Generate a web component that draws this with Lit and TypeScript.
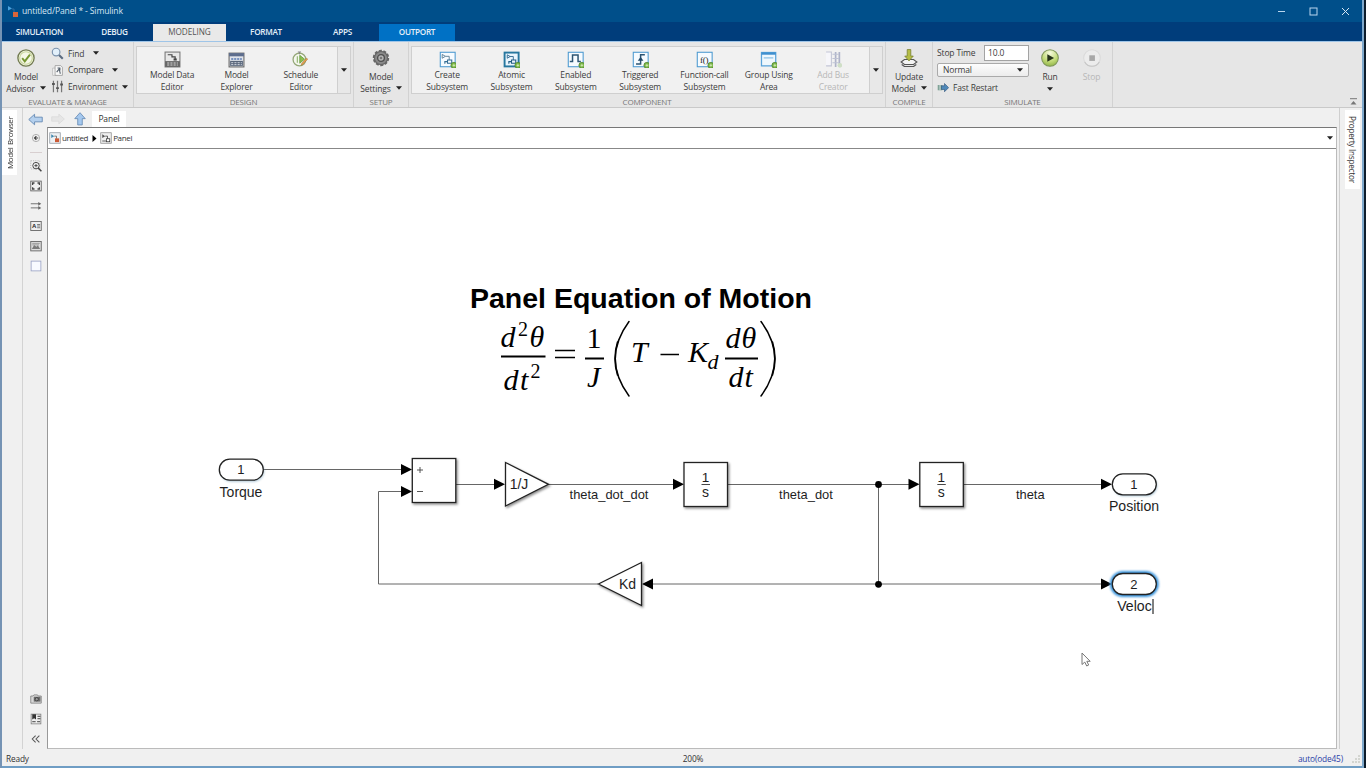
import { LitElement, html, svg, css, nothing } from "lit";
import { customElement } from "lit/decorators.js";
import { classMap } from "lit/directives/class-map.js";

const caret = html`<svg class="caret" width="6" height="4" viewBox="0 0 6 4"><path d="M0 .3h6L3 3.8z" fill="#222" /></svg>`;

const plus = svg`<circle cx="14" cy="13.500" r="2.800" fill="#7db84a" stroke="#4a7f2c" stroke-width=".7"/><path d="M14 12.300v2.400M12.800 13.500h2.400" stroke="#dff0c8" stroke-width=".7"/>`;
const box = svg`<rect x="1.2" y="1.2" width="14" height="13.6" fill="#f6fbff" stroke="#4d9ad0" stroke-width="1"/>`;

const icons: Record<string, unknown> = {
  advisor: svg`<circle cx="8" cy="8" r="7.2" fill="#f5f7e6" stroke="#727b50" stroke-width="1.2"/><circle cx="8" cy="8" r="5.6" fill="none" stroke="#c8d59b" stroke-width="1"/><path d="M4.6 8.2l2.3 2.8 4.6-6" fill="none" stroke="#769632" stroke-width="1.7"/>`,
  data: svg`<rect x="1" y="1" width="14" height="14" fill="#e8e8e8" stroke="#777"/><path d="M1 9.5h14V15H1z" fill="#666"/><path d="M3 11.3h10M3 13.2h10" stroke="#ddd" stroke-width=".9" stroke-dasharray="2 1"/><path d="M3.5 3.5h4v2h3v2.5" fill="none" stroke="#444" stroke-width="1.1"/><path d="M9 7h3v2H9z" fill="#444"/>`,
  explorer: svg`<rect x="1" y="2" width="14" height="13" fill="#dfe3ea" stroke="#666"/><path d="M1 2h14v3H1z" fill="#5d6d8d"/><path d="M3 7.5h10" stroke="#5577b0" stroke-width="1.4" stroke-dasharray="2 .8"/><path d="M2 9.3h12V14H2z" fill="#576479"/><path d="M3 11h10M3 12.8h10" stroke="#e5e8ee" stroke-width=".8" stroke-dasharray="2 1"/>`,
  schedule: svg`<circle cx="7" cy="8" r="6" fill="#f4f6ee" stroke="#94a777" stroke-width="1.2"/><path d="M5.5 1h3M7 1v2" stroke="#888"/><path d="M7.3 4v7.5l4.5-3.8z" fill="#8dbf52" stroke="#5f9634" stroke-width=".7"/><path d="M5 5v6" stroke="#89b068"/><path d="M14.8 7.5l-4.6 5.2-1.5.8.4-1.7 4.4-5z" fill="#e9a24d" stroke="#a9703a" stroke-width=".5"/>`,
  gear: svg`<circle cx="8" cy="8" r="6.3" fill="#777" stroke="#666" stroke-width="2" stroke-dasharray="2.6 1.35"/><circle cx="8" cy="8" r="5.8" fill="#8a8a8a" stroke="#666"/><circle cx="8" cy="8" r="3" fill="#b5b5b5" stroke="#4f4f4f" stroke-width="1.2"/><circle cx="8" cy="8" r="1.1" fill="#777"/>`,
  create: svg`${box}<path d="M3 3.2v3.6l3-1.8zM6 5h3.6v3.5" fill="none" stroke="#5f8298" stroke-width=".9"/><path d="M8 8.5h4v3H8zM8 10H5.5v2" fill="none" stroke="#356d94"/>${plus}`,
  atomic: svg`<rect x="1.5" y="1.5" width="13.2" height="13" fill="#eaf5fd" stroke="#27779f" stroke-width="1.8"/><path d="M4 3.6v3.2l2.7-1.6zM6.5 5.2h3.2v3.3" fill="none" stroke="#356d94" stroke-width=".9"/><path d="M8 8.5h4v3H8zM8 10H5.5v2" fill="none" stroke="#205d86"/>${plus}`,
  enabled: svg`${box}<path d="M2.6 9.8h2.6V3.7h5.2v6.1H13" fill="none" stroke="#2c5573" stroke-width="1.4"/>${plus}`,
  triggered: svg`${box}<path d="M3.8 12.3h4.3V3.6h4" fill="none" stroke="#2c5573" stroke-width="1.4"/><path d="M5.4 9.2h5.4L8.1 5.6z" fill="#1f4867"/>${plus}`,
  func: svg`${box}<text x="7.700" y="11.400" class="fx">f()</text>${plus}`,
  group: svg`<rect x="1.4" y="1.4" width="13.4" height="12.6" fill="#eef7fd" stroke="#5aa3da" stroke-width="1.2"/><path d="M1.4 2.4h13.4" stroke="#3f8fce" stroke-width="2.2"/><path d="M3.5 6.5h9" stroke="#7cb8e2" stroke-width="1"/>${plus}`,
  bus: svg`<path d="M1 1h5v13H1" fill="#f6f6fa" stroke="#c3c6d6"/><path d="M10 1v14M13.5 1v14" stroke="#aeb3c8" stroke-width="1.6"/><path d="M7 3h6M7 7h6M7 11h6" stroke="#bfc3d5"/><circle cx="14" cy="13.500" r="2.200" fill="#cfdfc6"/>`,
  update: svg`<path d="M1 11.5l3-2.2h8l3 2.2-3 2.3H4z" fill="#f3f3f3" stroke="#555"/><path d="M1.5 13.8L4 15.6h8l2.5-1.8" fill="none" stroke="#555"/><path d="M6.4.5h3.2v5.8h2.2L8 10.6 4.2 6.3h2.2z" fill="#b5bd45" stroke="#76802f" stroke-width=".7"/>`,
  run: svg`<defs><radialGradient id="g" cx=".5" cy=".2" r=".9"><stop offset="0" stop-color="#f6fadf"/><stop offset=".55" stop-color="#c2db79"/><stop offset="1" stop-color="#82a83a"/></radialGradient></defs><circle cx="8" cy="8" r="7.4" fill="url(#g)" stroke="#7d945a" stroke-width=".9"/><path d="M5.6 4.6v6.8l6-3.4z" fill="#26331a"/>`,
  stop: svg`<circle cx="8" cy="8" r="7.4" fill="#ececec" stroke="#dadada" stroke-width=".9"/><path d="M1.500 11.500a7.400 7.400 0 0 0 13 0" fill="none" stroke="#c6c6c6"/><rect x="5.600" y="5.600" width="5" height="5" fill="#a8a8a8"/>`,
  find: svg`<path d="M9.5 9.5l5 5" stroke="#5c6c80" stroke-width="2.6"/><circle cx="6.3" cy="6.3" r="4.7" fill="#e2f0fb" stroke="#7a92ad" stroke-width="1.4"/>`,
  compare: svg`<path d="M2 5h6v9H2z" fill="#f4f4f4" stroke="#bbb"/><path d="M5 2h7l2 2v10H5z" fill="#fafafa" stroke="#999"/><path d="M7 10l3-4 1.5 6M8 5h3v3" fill="none" stroke="#55606c" stroke-width="1.3"/>`,
  env: svg`<path d="M3 1v14M8 1v14M13 1v14" stroke="#777" stroke-width="1.5"/><path d="M1.3 5h3.4M6.3 10h3.4M11.3 5.5h3.4" stroke="#555" stroke-width="2.4"/>`,
  fast: svg`<path d="M1 4h6v7H1z" fill="#6f9487"/><path d="M3 4v7M5 4v7" stroke="#cfe0dc"/><path d="M6 5h4V2l5.5 5.5L10 13v-3H6z" fill="#4f88b8" stroke="#2e5379" stroke-width=".8"/>`,
  back: svg`<path d="M.8 8l6.2-5.6v3.1h8.2v5H7v3.1z" fill="#b4d0ee" stroke="#5e84b0" stroke-width=".9"/>`,
  fwd: svg`<path d="M15.2 8L9 2.4v3.1H.8v5H9v3.1z" fill="#e6e6e6" stroke="#dadada" stroke-width=".9"/>`,
  up: svg`<path d="M8 .8L2 7.6h3.4v7.2h5.2V7.6H14z" fill="#a5c8ee" stroke="#5e84b0" stroke-width=".9"/>`,
  hide: svg`<circle cx="8" cy="8" r="4.8" fill="#f5f5f5" stroke="#999"/><path d="M11 8H6.400M8.500 5.500L6 8l2.500 2.500" fill="none" stroke="#444" stroke-width="1.600"/>`,
  zoom: svg`<rect x="1" y="1" width="12" height="11" fill="none" stroke="#aaa" stroke-dasharray="1.5 1.5"/><circle cx="8" cy="7.5" r="4.3" fill="#f4f4f4" stroke="#444" stroke-width="1.3"/><path d="M11 10.7l4.2 4.2" stroke="#444" stroke-width="2"/><path d="M5.8 7.5h4.4M8 5.3v4.4" stroke="#333" stroke-width="1.1"/>`,
  fit: svg`<rect x="1" y="1.5" width="14" height="13" fill="#f0f0f0" stroke="#666" stroke-width="1.2"/><path d="M3.500 6.500V4H6M10 4h2.500v2.500M12.500 9.500V12H10M6 12H3.500V9.500" fill="none" stroke="#444" stroke-width="1.700"/>`,
  arrows: svg`<path d="M1 5h11M1 10.500h11" stroke="#666" stroke-width="1.200"/><path d="M11 2.500L15 5l-4 2.500zM11 8l4 2.500-4 2.500z" fill="#666"/>`,
  annot: svg`<rect x="1" y="2" width="14" height="12" fill="#eee" stroke="#666" stroke-width="1.200"/><text x="2.600" y="11" class="ann">A</text><path d="M9.500 6h4M9.500 8h4M9.500 10.300h4" stroke="#444" stroke-width=".9"/>`,
  image: svg`<rect x="1" y="2" width="14" height="12.500" fill="#ddd" stroke="#666" stroke-width="1.200"/><path d="M2.500 12l3-5.500 3 2.500 2-2 3 5z" fill="#7a7a7a"/><path d="M3 4.500h10M3 6.500h9" stroke="#888"/>`,
  area: svg`<rect x="1.500" y="1.500" width="13" height="13" fill="#f8faff" stroke="#9aa3c4" stroke-width="1.100"/>`,
  camera: svg`<path d="M1 4h3l1.200-1.500H10L11 4h4v9.500H1z" fill="#d8d8d8" stroke="#777"/><path d="M5 5h9v6.500H5z" fill="#6c6c6c"/><circle cx="9" cy="8.300" r="2.200" fill="#999" stroke="#333"/>`,
  report: svg`<rect x="1.500" y="1.500" width="13" height="13" fill="#eee" stroke="#777"/><path d="M3 1.500h5v7L5.500 7 3 8.500z" fill="#333"/><path d="M10 4.500h4M10 7.500h4M3 11.500h4.500M9.500 11.500h4" stroke="#666" stroke-width="1.500"/>`,
  chevrons: svg`<path d="M7.500 3.500L3 8l4.500 4.500M12.500 3.500L8 8l4.500 4.500" fill="none" stroke="#555" stroke-width="1.400"/>`,
  model: svg`<rect x="1" y="1" width="14" height="14" fill="#eef1f4" stroke="#8b949e"/><path d="M3 3v5l4-2.500z" fill="#3f86ad"/><path d="M7 5.500h3V9" fill="none" stroke="#555"/><rect x="8" y="8.500" width="5.500" height="5" fill="#cb5a35"/>`,
  subsys: svg`<rect x="1" y="1" width="14" height="14" fill="#f1f1f1" stroke="#8b8b8b"/><path d="M3 3v5l4-2.500z" fill="#555"/><path d="M7 5.500h3V9M3 12h5" fill="none" stroke="#333"/><rect x="8.500" y="9" width="4.500" height="4" fill="#fff" stroke="#333"/>`,
};

const icon = (name: string, size = 16) =>
  html`<svg class="icon" width=${size} height=${size} viewBox="0 0 16 16">${icons[name]}</svg>`;

interface Tool { icon: string; a: string; b: string; off?: boolean }
const design: Tool[] = [
  { icon: "data", a: "Model Data", b: "Editor" },
  { icon: "explorer", a: "Model", b: "Explorer" },
  { icon: "schedule", a: "Schedule", b: "Editor" },
];
const component: Tool[] = [
  { icon: "create", a: "Create", b: "Subsystem" },
  { icon: "atomic", a: "Atomic", b: "Subsystem" },
  { icon: "enabled", a: "Enabled", b: "Subsystem" },
  { icon: "triggered", a: "Triggered", b: "Subsystem" },
  { icon: "func", a: "Function-call", b: "Subsystem" },
  { icon: "group", a: "Group Using", b: "Area" },
  { icon: "bus", a: "Add Bus", b: "Creator", off: true },
];

@customElement("tool-strip")
class ToolStrip extends LitElement {
  static styles = css`
    :host { display: flex; height: 66px; background: #e6e6e6; border-bottom: 1px solid #c9c9c9; box-sizing: border-box; font: 8.500px/11.500px "Open Sans", sans-serif; letter-spacing: -0.150px; color: #3c3c3c; }
    svg { display: block; flex: none; }
    .section { display: flex; flex-direction: column; box-sizing: border-box; border-right: 1px solid #d2d2d2; }
    .evaluate { width: 132px; }
    .design { width: 220px; }
    .setup { width: 55px; }
    .component { width: 477px; }
    .compile { width: 47px; }
    .simulate { width: 180px; }
    .body { flex: 1; display: flex; min-height: 0; }
    .caption { height: 12px; line-height: 13px; text-align: center; font-size: 8px; letter-spacing: -0.180px; color: #777; white-space: nowrap; }
    .big { display: flex; flex-direction: column; align-items: center; padding-top: 7px; box-sizing: border-box; white-space: nowrap; }
    .big .label { padding-top: 4px; text-align: center; }
    .big .line { display: flex; align-items: center; justify-content: center; gap: 5px; height: 11.500px; }
    .wide { width: 48px; }
    .full { width: 100%; }
    .run { width: 42px; }
    .stop { width: 41px; }
    .runcaret { padding-top: 4px; }
    .list { display: flex; flex-direction: column; padding-top: 3px; padding-left: 1px; }
    .row { display: flex; align-items: center; height: 17.400px; gap: 4px; white-space: nowrap; }
    .row .caret { margin-left: 5px; }
    .row .near { margin-left: -4px; }
    .gallery { display: flex; margin: 4px 2px 0 2px; height: 48px; flex: 1; box-sizing: border-box; border: 1px solid #cfcfcf; background: #f1f1f1; }
    .item { width: 64.330px; box-sizing: border-box; display: flex; flex-direction: column; align-items: center; padding-top: 4px; text-align: center; white-space: nowrap; }
    .design .item { padding-left: 6px; }
    .item .label { padding-top: 1px; }
    .items { flex: 1; display: flex; }
    .component .items { padding-left: 3px; }
    .more { width: 12px; background: #e8e8e8; border-left: 1px solid #cfcfcf; display: flex; align-items: center; justify-content: center; }
    .off { color: #b7b7b7; }
    .form { width: 92px; padding-left: 4px; padding-top: 3px; display: flex; flex-direction: column; gap: 3px; }
    .time { display: flex; align-items: center; justify-content: space-between; height: 15px; padding-top: 1px; box-sizing: border-box; }
    .field { width: 45px; height: 16px; box-sizing: border-box; border: 1px solid #a3a3a3; background: #fff; padding: 1px 3px; }
    .select { height: 15px; box-sizing: border-box; border: 1px solid #aaa; border-radius: 2px; background: linear-gradient(#fdfdfd, #ececec); display: flex; align-items: center; justify-content: space-between; padding: 0 5px; }
    .restart { display: flex; align-items: center; gap: 4px; height: 16px; }
    .fx { font: 8.500px "Liberation Serif", serif; text-anchor: middle; fill: #222; }
    .tail { flex: 1; display: flex; align-items: flex-end; justify-content: flex-end; padding: 0 5px 1px 0; }
  `;

  private items(list: Tool[]) {
    return html`<div class="gallery">
      <div class="items">${list.map((t) => html`<div class=${classMap({ item: true, off: !!t.off })}>${icon(t.icon, 17)}<div class="label">${t.a}<br />${t.b}</div></div>`)}</div>
      <div class="more">${caret}</div>
    </div>`;
  }

  private big(name: string, cls: string, a: string, b?: string) {
    return html`<div class="big ${cls}">${icon(name, 18)}
      <div class="label"><div class="line">${a}</div>${b ? html`<div class="line">${b} ${caret}</div>` : nothing}</div>
    </div>`;
  }

  render() {
    return html`
      <div class="section evaluate"><div class="body">
        ${this.big("advisor", "wide", "Model", "Advisor")}
        <div class="list">
          <div class="row">${icon("find", 13)}Find ${caret}</div>
          <div class="row">${icon("compare", 13)}Compare ${caret}</div>
          <div class="row">${icon("env", 13)}Environment <span class="near">${caret}</span></div>
        </div></div><div class="caption">EVALUATE &amp; MANAGE</div></div>
      <div class="section design"><div class="body">${this.items(design)}</div><div class="caption">DESIGN</div></div>
      <div class="section setup"><div class="body">${this.big("gear", "full", "Model", "Settings")}</div><div class="caption">SETUP</div></div>
      <div class="section component"><div class="body">${this.items(component)}</div><div class="caption">COMPONENT</div></div>
      <div class="section compile"><div class="body">${this.big("update", "full", "Update", "Model")}</div><div class="caption">COMPILE</div></div>
      <div class="section simulate"><div class="body">
        <div class="form">
          <div class="time">Stop Time<div class="field">10.0</div></div>
          <div class="select">Normal ${caret}</div>
          <div class="restart">${icon("fast", 12)}Fast Restart</div>
        </div>
        <div class="big run">${icon("run", 18)}<div class="label"><div class="line">Run</div></div><div class="runcaret">${caret}</div></div>
        <div class="big stop off">${icon("stop", 18)}<div class="label"><div class="line">Stop</div></div></div>
      </div><div class="caption">SIMULATE</div></div>
      <div class="tail"><svg width="7" height="8" viewBox="0 0 7 8"><path d="M0 .7h7" stroke="#777" /><path d="M.5 6.500h6L3.500 3z" fill="#777" /></svg></div>
    `;
  }
}

const line = (d: string) => svg`<path class="wire" d=${d} />`;
const head = (x: number, y: number, dir = 1) => svg`<path d="M${x} ${y}l${-11 * dir} -5.500v11z" fill="#000" />`;
const label = (x: number, y: number, s: string, size = 13) =>
  svg`<text x=${x} y=${y} font-size=${size} text-anchor="middle">${s}</text>`;
const port = (y: number, x: number, n: string, on = false) => svg`
  ${on
    ? svg`<rect x=${x - 2.5} y=${y - 13} width="49" height="26" rx="13" fill="#3b94dc" filter="url(#glow)" />`
    : svg`<rect x=${x + 1} y=${y - 9} width="44" height="21" rx="10.500" fill="#6f9bb5" opacity=".55" filter="url(#soft)" />`}
  <rect x=${x} y=${y - 10.5} width="44" height="21" rx="10.500" class="block" />
  ${label(x + 21.5, y + 4.5, n)}`;
const square = (x: number, y: number) => svg`<rect x=${x} y=${y} width="43.500" height="44" class="block" filter="url(#drop)" />`;
const integrator = (x: number) => svg`
  ${square(x, 462.5)}
  ${label(x + 21.5, 482.3, "1", 13.5)}
  <path d="M${x + 17.5} 484.500h8.500" stroke="#333" stroke-width=".9" />
  ${label(x + 21.5, 497, "s", 14)}`;

@customElement("model-canvas")
class ModelCanvas extends LitElement {
  static styles = css`
    :host { display: block; background: #fff; overflow: hidden; letter-spacing: 0; }
    .sheet { display: block; font-family: "Liberation Sans", Arial, sans-serif; fill: #1e1e1e; }
    .wire { fill: none; stroke: #666; stroke-width: 1; }
    .block { fill: #fff; stroke: #222; stroke-width: 1.300; }
    .title { font-size: 28.500px; font-weight: bold; fill: #000; }
    .math { font: italic 30px "Liberation Serif", serif; fill: #000; }
    .up { font-style: normal; }
    .sup { font-size: 20px; }
    .sub { font-size: 22px; }
    .paren { fill: none; stroke: #000; stroke-width: 1.500; stroke-linecap: round; }
  `;

  render() {
    return html`<svg class="sheet" width="1288" height="598" viewBox="48 149 1288 598">
      <defs>
        <filter id="drop" x="-20%" y="-20%" width="150%" height="150%"><feDropShadow dx="1.300" dy="1.500" stdDeviation="1.100" flood-opacity=".45" /></filter>
        <filter id="soft" x="-20%" y="-40%" width="140%" height="180%"><feGaussianBlur stdDeviation="1.200" /></filter>
        <filter id="glow" x="-20%" y="-40%" width="140%" height="180%"><feGaussianBlur stdDeviation="1" /></filter>
      </defs>
      <text x="470" y="308" class="title" textLength="342">Panel Equation of Motion</text>
      <g class="math">
        <text x="500.500" y="347">d</text><text x="518" y="335.500" class="up sup">2</text><text x="529.500" y="347">θ</text>
        <text x="503.500" y="389.500">d</text><text x="520" y="389.500">t</text><text x="530.500" y="378" class="up sup">2</text>
        <text x="586.500" y="348" class="up">1</text><text x="587" y="386.500">J</text>
        <text x="631" y="362">T</text><text x="688" y="362">K</text><text x="707.500" y="368.500" class="sub">d</text>
        <text x="725.500" y="348">d</text><text x="741.500" y="348">θ</text>
        <text x="728.500" y="387">d</text><text x="744.500" y="387">t</text>
      </g>
      <path d="M501 356.500h44.500M585 358.500h19M725 358.500h33" stroke="#000" stroke-width="2" />
      <path d="M555 350.500h20M555 357.500h20M660.500 354.500h18.500" stroke="#000" stroke-width="1.700" />
      <path d="M629 321.500Q601.500 358.800 629 396M761 321.500Q788.500 358.800 761 396" class="paren" />
      <path d="M617.500 342Q612.500 358.800 617.500 375M772.500 342Q777.500 358.800 772.500 375" class="paren" />

      ${line("M263 469.500H403")}${line("M456 484.500H496")}${line("M548 484.500H674")}${line("M727 484.500H910")}
      ${line("M963 484.500H1102")}${line("M878.500 484.500V584H1102")}${line("M878.500 584H652")}${line("M598 584H378.500V491.500H402")}
      ${square(412.3, 458.5)}
      ${head(412, 469.5)}${head(412, 491.5)}${head(505, 484.3)}${head(684, 484.3)}${head(919.5, 484.3)}${head(1112, 484.3)}${head(1112, 584)}${head(642, 584, -1)}
      <path d="M417 470h6M420 467v6M417 491.500h6" stroke="#444" stroke-width=".9" />
      <path d="M505.500 462.500V506L548.500 484.300z" class="block" filter="url(#drop)" />
      <path d="M641.500 562.500V605.500L598.500 584z" class="block" filter="url(#drop)" />
      ${label(519, 489, "1/J", 14)}${label(627.5, 589, "Kd", 14)}
      ${integrator(684)}${integrator(919.8)}
      <circle cx="878.500" cy="484.500" r="3.400" fill="#000" /><circle cx="878.500" cy="584.300" r="3.400" fill="#000" />
      ${port(469.7, 219.3, "1")}${port(484.3, 1112.3, "1")}${port(584, 1112.3, "2", true)}
      ${label(241, 496.7, "Torque", 14)}${label(1134, 511, "Position", 14.1)}${label(1134.5, 611, "Veloc", 14.1)}
      <path d="M1153 599v15" stroke="#000" />
      ${label(609, 499, "theta_dot_dot", 12.9)}${label(806, 499, "theta_dot", 12.9)}${label(1030.3, 499, "theta", 12.9)}
      <path d="M1082 653v11.500l2.800-2.400 1.900 3.900 2-1-1.900-3.700h3.400z" fill="#fff" stroke="#777" />
    </svg>`;
  }
}

@customElement("app-root")
class AppRoot extends LitElement {
  static styles = css`
    :host { display: flex; width: 1366px; height: 768px; overflow: hidden; box-sizing: border-box; border-left: 2px solid #7593b4; font: 8.500px/12px "Open Sans", sans-serif; letter-spacing: -0.150px; color: #333; background: #f0f0f0; }
    svg { display: block; flex: none; }
    .window { flex: 1; display: flex; flex-direction: column; min-width: 0; border-bottom: 2px solid #6f9dc4; }
    .edge { width: 2px; background: #0d1d2c; border-left: 2px solid #7fa9cc; }
    .titlebar { height: 22px; background: #004f8a; display: flex; align-items: center; color: #d5e5f2; padding: 0 12px 0 5px; font-size: 8.600px; }
    .name { flex: 1; padding-left: 4px; }
    .controls { display: flex; gap: 23px; align-items: center; }
    .tabs { height: 19px; background: #003d7b; display: flex; padding-left: 1px; border-bottom: 1px solid #9fc5e8; }
    .tab { display: flex; align-items: center; justify-content: center; box-sizing: border-box; margin-top: 2px; padding-bottom: 2px; color: #e4eef8; font-size: 8.200px; font-weight: 600; letter-spacing: -0.300px; white-space: nowrap; }
    .w1 { width: 73px; } .w2 { width: 77px; } .w3 { width: 73px; } .w4 { width: 80px; } .w5 { width: 73px; } .w6 { width: 76px; }
    .current { background: #e9e9e9; color: #555; font-weight: 400; letter-spacing: -0.050px; }
    .context { background: #0071c5; }
    .main { flex: 1; display: flex; min-height: 0; }
    .side { width: 21px; box-sizing: border-box; border-right: 1px solid #d3d3d3; padding-top: 2px; }
    .right { width: 23px; border-right: 0; border-left: 1px solid #cfcfcf; margin-left: 2px; padding-left: 5px; }
    .vtab { writing-mode: vertical-rl; background: #fff; width: 15px; display: flex; align-items: center; justify-content: center; white-space: nowrap; font-size: 8.200px; line-height: 15px; letter-spacing: -0.250px; }
    .left { height: 65px; transform: rotate(180deg); font-size: 8px; letter-spacing: -0.400px; word-spacing: 1px; }
    .prop { height: 79px; }
    .editor { flex: 1; display: flex; flex-direction: column; min-width: 0; padding-left: 3px; }
    .nav { height: 19px; display: flex; align-items: center; padding: 3px 0 0 2px; gap: 8px; box-sizing: border-box; }
    .doc { background: #fff; width: 34px; height: 17px; line-height: 16px; text-align: center; margin-left: -3px; }
    .work { flex: 1; display: flex; min-height: 0; }
    .palette { width: 21px; display: flex; flex-direction: column; align-items: center; justify-content: space-between; box-sizing: border-box; padding: 5px 2px 4px 0; }
    .stack { display: flex; flex-direction: column; align-items: center; gap: 8px; }
    .rule { width: 12px; height: 1px; background: #d8cfd0; margin-bottom: -1px; }
    .view { flex: 1; display: flex; flex-direction: column; border-left: 1px solid #999; border-right: 1px solid #bbb; border-bottom: 1px solid #bbb; border-top: 1px solid #777; min-width: 0; }
    .crumbs { height: 21px; box-sizing: border-box; border-bottom: 1px solid #888; background: #fff; display: flex; align-items: center; gap: 1px; padding: 0 3px 0 1px; font-size: 8px; letter-spacing: -0.350px; }
    .sep { margin: 0 2px 0 3px; }
    .fill { flex: 1; }
    .canvas { flex: 1; min-height: 0; }
    .status { height: 17px; display: grid; grid-template-columns: 1fr 1fr 1fr; align-items: center; padding: 2px 2px 0 4px; box-sizing: border-box; font-size: 8.300px; }
    .zoomlevel { text-align: center; padding-left: 20px; }
    .solver { display: flex; align-items: center; justify-content: flex-end; gap: 9px; color: #2a3fa8; }
    .ann { font: bold 8px "Liberation Sans", sans-serif; fill: #222; }
  `;

  render() {
    const tabs: [string, string, string][] = [
      ["SIMULATION", "w1", ""], ["DEBUG", "w2", ""], ["MODELING", "w3", "current"],
      ["FORMAT", "w4", ""], ["APPS", "w5", ""], ["OUTPORT", "w6", "context"],
    ];
    return html`
      <div class="window">
        <div class="titlebar">
          <svg width="11" height="12" viewBox="0 0 11 12"><path d="M1 1l4 2.500-4 2z" fill="#4aa3df" /><path d="M5 4h2v3" fill="none" stroke="#336b9c" /><rect x="6" y="7" width="5" height="5" fill="#d9653a" /></svg>
          <span class="name">untitled/Panel * - Simulink</span>
          <div class="controls">
            <svg width="9" height="9" viewBox="0 0 9 9"><path d="M1 4.500h7" stroke="#b9d6ee" /></svg>
            <svg width="9" height="9" viewBox="0 0 9 9"><rect x="1" y="1" width="7" height="7" fill="none" stroke="#b9d6ee" /></svg>
            <svg width="9" height="9" viewBox="0 0 9 9"><path d="M1 1l7 7M8 1L1 8" stroke="#d5e5f2" /></svg>
          </div>
        </div>
        <div class="tabs">${tabs.map(([t, w, c]) => html`<div class="tab ${w} ${c}">${t}</div>`)}</div>
        <tool-strip></tool-strip>
        <div class="main">
          <div class="side"><div class="vtab left">Model Browser</div></div>
          <div class="editor">
            <div class="nav">${icon("back", 15)}${icon("fwd", 14)}${icon("up", 14)}<div class="doc">Panel</div></div>
            <div class="work">
              <div class="palette">
                <div class="stack">${icon("hide", 12)}<div class="rule"></div>${["zoom", "fit", "arrows", "annot", "image", "area"].map((n) => icon(n, 12))}</div>
                <div class="stack">${["camera", "report", "chevrons"].map((n) => icon(n, 12))}</div>
              </div>
              <div class="view">
                <div class="crumbs">${icon("model", 12)}untitled<svg class="sep" width="5" height="7" viewBox="0 0 5 7"><path d="M.5 0v7L4.500 3.500z" /></svg>${icon("subsys", 12)}Panel<span class="fill"></span>${caret}</div>
                <model-canvas class="canvas"></model-canvas>
              </div>
            </div>
          </div>
          <div class="side right"><div class="vtab prop">Property Inspector</div></div>
        </div>
        <div class="status"><span>Ready</span><span class="zoomlevel">200%</span><span class="solver">auto(ode45)<svg width="8" height="8" viewBox="0 0 8 8"><path d="M6 0h2v2H6zM3 3h2v2H3zM6 3h2v2H6zM0 6h2v2H0zM3 6h2v2H3zM6 6h2v2H6z" fill="#d3d5d0" /></svg></span></div>
      </div>
      <div class="edge"></div>
    `;
  }
}
